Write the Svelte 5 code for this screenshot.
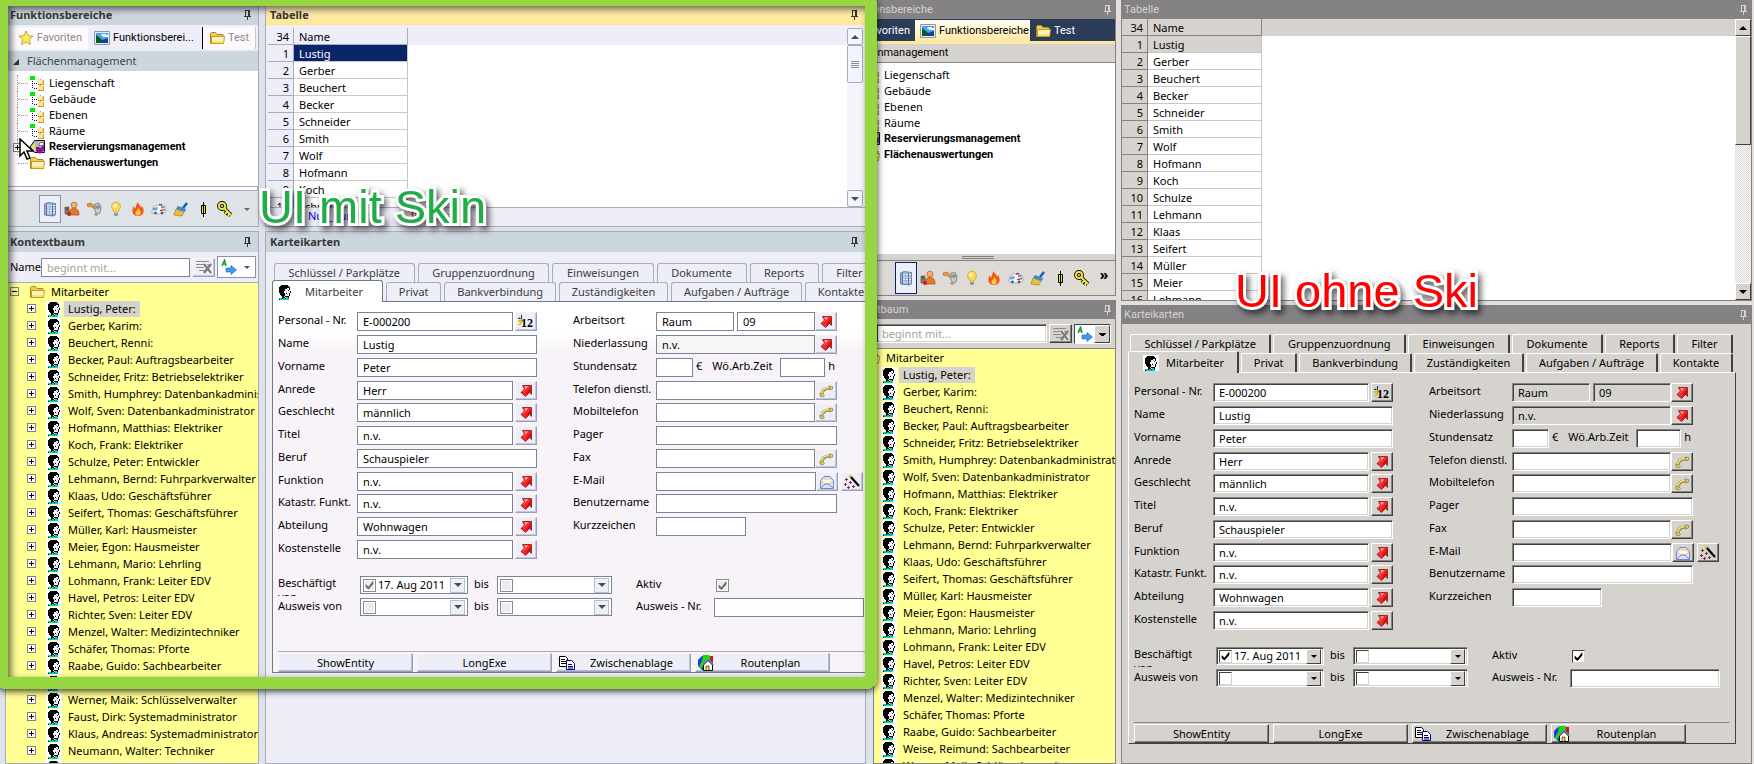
<script>
    const people = [
        "Lustig, Peter:",
        "Gerber, Karim:",
        "Beuchert, Renni:",
        "Becker, Paul: Auftragsbearbeiter",
        "Schneider, Fritz: Betriebselektriker",
        "Smith, Humphrey: Datenbankadministrator",
        "Wolf, Sven: Datenbankadministrator",
        "Hofmann, Matthias: Elektriker",
        "Koch, Frank: Elektriker",
        "Schulze, Peter: Entwickler",
        "Lehmann, Bernd: Fuhrparkverwalter",
        "Klaas, Udo: Geschäftsführer",
        "Seifert, Thomas: Geschäftsführer",
        "Müller, Karl: Hausmeister",
        "Meier, Egon: Hausmeister",
        "Lehmann, Mario: Lehrling",
        "Lohmann, Frank: Leiter EDV",
        "Havel, Petros: Leiter EDV",
        "Richter, Sven: Leiter EDV",
        "Menzel, Walter: Medizintechniker",
        "Schäfer, Thomas: Pforte",
        "Raabe, Guido: Sachbearbeiter",
        "Weise, Reimund: Sachbearbeiter",
        "Werner, Maik: Schlüsselverwalter",
        "Faust, Dirk: Systemadministrator",
        "Klaus, Andreas: Systemadministrator",
        "Neumann, Walter: Techniker",
        "Vogel, Jens: Techniker"
    ];

    const names = people.slice(0, 16).map((p) => p.split(",")[0]);

    const areas = [
        { label: "Liegenschaft", icon: "nodes" },
        { label: "Gebäude", icon: "nodes" },
        { label: "Ebenen", icon: "nodes" },
        { label: "Räume", icon: "nodes" },
        { label: "Reservierungsmanagement", icon: "reserve", bold: true, box: true },
        { label: "Flächenauswertungen", icon: "folder", bold: true }
    ];

    const tools = ["building", "person", "hammer", "bulb", "fire", "ambulance", "brush", "fuse", "key"];

    const tabRows = [
        ["Schlüssel / Parkplätze", "Gruppenzuordnung", "Einweisungen", "Dokumente", "Reports", "Filter"],
        ["Mitarbeiter", "Privat", "Bankverbindung", "Zuständigkeiten", "Aufgaben / Aufträge", "Kontakte"]
    ];

    const leftFields = [
        { label: "Personal - Nr.", value: "E-000200", icon: "number" },
        { label: "Name", value: "Lustig" },
        { label: "Vorname", value: "Peter" },
        { label: "Anrede", value: "Herr", icon: "arrow" },
        { label: "Geschlecht", value: "männlich", icon: "arrow" },
        { label: "Titel", value: "n.v.", icon: "arrow" },
        { label: "Beruf", value: "Schauspieler" },
        { label: "Funktion", value: "n.v.", icon: "arrow" },
        { label: "Katastr. Funkt.", value: "n.v.", icon: "arrow" },
        { label: "Abteilung", value: "Wohnwagen", icon: "arrow" },
        { label: "Kostenstelle", value: "n.v.", icon: "arrow" }
    ];

    const rightFields = [
        { label: "Telefon dienstl.", icon: "phone" },
        { label: "Mobiltelefon", icon: "phone" },
        { label: "Pager" },
        { label: "Fax", icon: "phone" },
        { label: "E-Mail", icon: "mail", extra: "wand" },
        { label: "Benutzername" },
        { label: "Kurzzeichen", short: true }
    ];

    const actions = [
        { label: "ShowEntity" },
        { label: "LongExe" },
        { label: "Zwischenablage", icon: "copy" },
        { label: "Routenplan", icon: "house" }
    ];

    const skins = [
        { id: "skin", area: "Funktionsberei..." },
        { id: "plain", area: "Funktionsbereiche" }
    ];
</script>

{#snippet icon(name)}
    <svg class="icon" viewBox="0 0 16 16" width="16" height="16" aria-hidden="true">
        {#if name === "head"}
            <g shape-rendering="crispEdges">
                <path fill="#fff" d="M0 0h16v16H0z" />
                <path fill="#000" d="M3 2h1V1h7v1h1v1h1v3h-1V4h-2v1H8v2H7v2h1v3h2v1H8v1H5v-2H4v-1H3V9H2V3h1z" />
                <path fill="#c8c8c8" d="M8 6h1v1H8zM10 5h1v1h-1zM9 8h1v1H9zM11 8h1v1h-1zM10 10h1v1h-1zM8 10h1v1H8zM7 12h1v1H7z" />
                <path fill="#2020d0" d="M11 6h1v1h-1z" />
                <path fill="#000" d="M12 5h1v1h-1zM13 7h1v2h-1zM12 9h1v2h-1zM10 12h2v1h-2zM12 11h1v1h-1zM9 9h1v1H9z" />
                <path fill="#0cc" d="M2 14h3v1H2zM6 14h2v1H6zM9 13h3v2H9zM3 15h9v1H3z" />
                <path fill="#000" d="M5 14h1v1H5zM8 14h1v1H8zM11 13h1v1h-1zM2 15h1v1H2z" />
            </g>
        {:else if name === "folder"}
            <path fill="#f0cc58" stroke="#b08818" d="M1.500 13.500v-10l1-1h4l1.500 2h6v9z" />
            <path fill="#fff6b8" stroke="#c89820" d="M2.500 13.500v-7h13l-1 7z" />
            <path fill="#f8e07c" d="M3 11h11.500l-.3 2H3z" />
        {:else if name === "nodes"}
            <g shape-rendering="crispEdges">
                <path fill="#0e0" d="M1 1h5v4H1z" />
                <path fill="#0000a0" d="M3 6h1v1H3zM3 8h1v1H3zM3 10h1v1H3zM3 12h1v1H3zM5 8h1v1H5zM7 8h1v1H7zM5 13h1v1H5zM7 13h1v1H7z" />
                <path fill="#b89c50" d="M9 4h3v1h3v5H9zM9 10h3v1h3v5H9z" />
                <path fill="#fce68c" d="M9 4h2v1h3v4H9zM9 10h2v1h3v4H9z" />
            </g>
        {:else if name === "reserve"}
            <path fill="#b8b8b8" stroke="#111" d="M5.500 1.500h10v12h-10L1 8z" />
            <path fill="#e8e060" d="M2 8l4-4v8z" />
            <path fill="#fff" stroke="#777" d="M9.500 6.500h5v-3h-3z" />
            <path fill="#90109a" d="M7 8h3l2 1 1-2h2v4l-4 4-4-3z" />
        {:else if name === "star"}
            <path fill="#ffe858" stroke="#b89028" stroke-width=".8" d="M8 1l2.100 4.600 5 .5-3.800 3.400 1.200 5L8 12l-4.500 2.500 1.200-5L1 6.100l5-.5z" />
        {:else if name === "picture"}
            <path fill="#e4ecf4" stroke="#8898b0" d="M.5 1.500h15v13H.5z" />
            <path fill="#48a0f0" d="M2 3h12v10H2z" />
            <path fill="#f8f8f8" d="M8 4h4v1h2v2H9V6H7z" />
            <path fill="#105820" d="M2 5l4 3 2 2 6 1v2H2z" />
            <path fill="#184090" d="M8 10l6-2v5H5z" />
        {:else if name === "building"}
            <path fill="#9db6d8" stroke="#49658c" stroke-width=".7" d="M2.500 3L6 1.500l7.500 1V14L11 15l-8.500-1z" />
            <path stroke="#eef4ff" stroke-width="1.200" d="M5 4.500h8M5 7h8M5 9.500h8M5 12h8" stroke-dasharray="2 1" />
            <path stroke="#344c74" d="M4.500 3v11.500M10.500 3v11.500" stroke-width=".6" />
        {:else if name === "person"}
            <circle cx="10" cy="4" r="3" fill="#f0b070" stroke="#b06020" stroke-width=".7" />
            <path fill="#e87820" stroke="#a84810" stroke-width=".7" d="M5 14c0-4 1-6.500 5-6.500s5 2.500 5 6.500z" />
            <path fill="#688" stroke="#444" stroke-width=".6" d="M1 6h4v7H1z" />
            <circle cx="3" cy="8" r="1.200" fill="#e02020" /><circle cx="5" cy="13" r="2" fill="#c82020" />
        {:else if name === "hammer"}
            <path fill="#e0a040" stroke="#a86c20" stroke-width=".7" d="M1 3l4-1 5 4-1 2-5-3-2 1z" />
            <path fill="#c8ccd0" stroke="#686c70" stroke-width=".7" d="M9 3l4-1 2 4-1 6-3 1-2-3z" />
            <circle cx="12" cy="6" r="2" fill="#8a9098" /><path fill="#d09030" d="M9 12l3 1-1 2-3-1z" />
        {:else if name === "bulb"}
            <path fill="#ffd850" stroke="#d8a020" stroke-width=".8" d="M8 1a4.500 4.500 0 0 1 3 7.800L10 11H6L5 8.800A4.500 4.500 0 0 1 8 1z" />
            <circle cx="7" cy="5" r="2" fill="#fff4c0" /><path fill="#90989c" d="M6 12h4v2l-1 1H7l-1-1z" />
        {:else if name === "fire"}
            <path fill="#f05818" d="M8 1c0 3 3 3 3 6l1-2c3 4 2 10-4 10S1 9 4 5c0 2 1 2 1 3 1-2 1-5 3-7z" />
            <path fill="#ffd040" d="M8 7c2 2 3 3 2.500 5.500C10 15 6 15 5.500 12.500 5 10 8 10 8 7z" />
        {:else if name === "ambulance"}
            <path fill="#f4f8fc" stroke="#8c9cac" stroke-width=".7" d="M1 10l1-4 4-2h6l3 3v4l-6 2-8-1z" />
            <path fill="#58a8e0" d="M2 7l5-1-1 3-4 .5zM10 5h3l1 2-4 .5z" /><path fill="#e02020" d="M8 3h3v1.500H8zM9 9l5-1v1.200l-5 1z" />
            <circle cx="4.500" cy="12" r="1.400" fill="#585c64" /><circle cx="11" cy="12" r="1.400" fill="#585c64" />
        {:else if name === "brush"}
            <path stroke="#1858b0" stroke-width="2.400" d="M10 7l4-5" /><path fill="#3888d8" d="M5 5l8 3-1 3-9-3z" />
            <path fill="#e8c040" stroke="#a08018" stroke-width=".7" d="M3 8l8 3-2 4-8-1z" />
        {:else if name === "fuse"}
            <path fill="#f0e020" stroke="#000" d="M6.500 4.500h4v8h-4z" /><path stroke="#000" d="M8.500 1v3M8.500 5v7M8.500 13v3" />
        {:else if name === "key"}
            <g fill="none" stroke="#000" stroke-width="3.800"><circle cx="5" cy="5" r="3" /><path d="M7 7l7 7M10 11l-2 2M12 13l-1 2" /></g>
            <g fill="none" stroke="#f4e840" stroke-width="2"><circle cx="5" cy="5" r="3" /><path d="M7 7l7 7M10 11l-2 2M12 13l-1 2" /></g>
        {:else if name === "arrow"}
            <path fill="#f22" stroke="#901010" stroke-width=".8" d="M4.500 2.500h9v9l-2-2L7.500 13.500 3 9.500l3.500-3.500z" />
            <path fill="#ff9c9c" d="M6 3.300h4.500L6 8.200l-1.500 1L7.500 6z" />
            <path fill="#801818" opacity=".6" d="M13 4v6l-1.500-1.300-3 3V10z" />
        {:else if name === "phone"}
            <path fill="none" stroke="#88783c" stroke-width="3" d="M3.500 12C4 7 7 4.500 13 5" />
            <path fill="none" stroke="#f0e07c" stroke-width="1.800" d="M3.500 11.500C4 7 7 4 13 4.500" />
            <path fill="#e0cc60" stroke="#88783c" stroke-width=".7" d="M2 10l3 1 1.500 1.500L5 14l-3-1zM11 3l3.500.5V6L12 7z" />
        {:else if name === "mail"}
            <path fill="#d8e0ff" stroke="#7c84c8" d="M1.500 14.500v-8L5 2.500h6l3.500 4v8z" />
            <path fill="#fff8d0" stroke="#c8b880" stroke-width=".6" d="M3 5h10v3l-3 2H6L3 8z" /><path fill="none" stroke="#7c84c8" d="M2 14l4-4h4l4 4" />
        {:else if name === "wand"}
            <path stroke="#000" stroke-width="2.200" d="M6 2l9 10" /><path stroke="#e8e020" stroke-width="2" d="M5 1l2 2" />
            <path fill="#803040" d="M2 4h1v3H2zM1 5h3v1H1zM1 9h1v3H1zM0 10h3v1H0zM6 7h1v3H6zM5 8h3v1H5zM4 12h1v3H4zM3 13h3v1H3zM9 11h1v3H9zM8 12h3v1H8z" />
        {:else if name === "number"}
            <path stroke="#c8b800" stroke-width="1.400" d="M0 7h5M1 3l3 3M1 11l3-3" /><path stroke="#0028b0" d="M3.500 1v4M0 4.500h2" />
            <text x="3" y="13" class="num-glyph">12</text>
        {:else if name === "copy"}
            <path fill="#fff" stroke="#000" d="M.5 1.500h6l2 2v8h-8z" /><path stroke="#000" d="M2 4.500h4M2 6.500h5M2 8.500h5" />
            <path fill="#fff" stroke="#000080" d="M7.500 5.500h5l3 3v6h-8z" /><path stroke="#000080" d="M9 9.500h4M9 11.500h5M9 13h5" />
        {:else if name === "house"}
            <path fill="#1040d8" d="M4 1h7l4 4v6l-4 4H4l-4-4V5z" /><path fill="#18d818" d="M5 0h6l3 3-6 4-5 7-2-3 3-5z" />
            <path fill="#d01818" d="M12 1h3v6l-3-2z" /><path fill="#fff" stroke="#000" d="M5.500 15.500V10L10 5.500l4.500 4.500v5.500z" />
            <path fill="#f0e020" stroke="#000" stroke-width=".6" d="M8 11h3v4.500H8z" /><path fill="none" stroke="#888" stroke-width="1.500" d="M4 10l6-6 5.500 6" />
        {:else if name === "clear"}
            <path stroke="#8c8c8c" d="M0 2.500h13M0 5.500h13M0 8.500h9M3 11.500h6" /><path stroke="#fff" stroke-width="4" d="M8 5l7 9" />
            <path stroke="#7c7c7c" stroke-width="2.400" d="M8 5l7 9M15 5l-7 9" />
        {:else if name === "sort"}
            <path fill="none" stroke="#18a038" stroke-width="1.500" d="M1 7l2.500-6L5 7M2 5h3" />
            <path fill="#3c9cf0" stroke="#1860b8" stroke-width=".6" d="M5 9h5V6.500l5.500 4.500-5.500 4.500V13H5z" />
        {/if}
    </svg>
{/snippet}

{#snippet title(text, highlight)}
    <header class="title" class:highlight>
        <h2>{text}</h2>
        <svg viewBox="0 0 9 10" width="9" height="10" aria-hidden="true">
            <path d="M2 0h5v6h1v1H5v3H4V7H1V6h1zM3 1v5h2V1z" fill="currentColor" fill-rule="evenodd" />
        </svg>
    </header>
{/snippet}

{#snippet date(id, label, value)}
    <span class="date">
        <input type="checkbox" checked={value !== ""} aria-label="{label} aktiv" />
        <input type="text" {id} {value} />
        <button type="button" class="drop" aria-label="{label} wählen"></button>
    </span>
{/snippet}

{#snippet app(skin)}
    <div class="app {skin.id}">
        <div class="side">
            <section class="panel upper">
                {@render title("Funktionsbereiche")}
                <nav class="areas">
                    <button type="button" class="fav">{@render icon("star")}Favoriten</button>
                    <button type="button" class="active">{@render icon("picture")}{skin.area}</button>
                    <button type="button">{@render icon("folder")}Test</button>
                </nav>
                <h3>Flächenmanagement</h3>
                <ul class="area-tree">
                    {#each areas as area}
                        <li class:bold={area.bold}>
                            {#if area.box}<b class="box"></b>{/if}
                            {@render icon(area.icon)}{area.label}
                        </li>
                    {/each}
                </ul>
                <div class="grip"></div>
                <div class="tools">
                    {#each tools as tool, i}
                        <button type="button" class:active={i === 0} aria-label={tool}>{@render icon(tool)}</button>
                    {/each}
                    <button type="button" class="more" aria-label="Mehr"></button>
                </div>
            </section>
            <section class="panel lower">
                {@render title("Kontextbaum")}
                <div class="search">
                    <label for="{skin.id}-search">Name</label>
                    <input type="text" id="{skin.id}-search" placeholder="beginnt mit..." />
                    <button type="button" class="key" aria-label="Leeren">{@render icon("clear")}</button>
                    <button type="button" class="sort" aria-label="Sortierung">{@render icon("sort")}<i></i></button>
                </div>
                <ul class="people">
                    <li class="root"><b class="box open"></b>{@render icon("folder")}<span>Mitarbeiter</span></li>
                    {#each people as person, i}
                        <li class:selected={i === 0}><b class="box"></b>{@render icon("head")}<span>{person}</span></li>
                    {/each}
                </ul>
            </section>
        </div>

        <div class="main">
            <section class="panel upper">
                {@render title("Tabelle", skin.id === "skin")}
                <div class="grid">
                    <div class="rows">
                        <table>
                            <thead><tr><th>34</th><th>Name</th></tr></thead>
                            <tbody>
                                {#each names as name, i}
                                    <tr class:selected={i === 0}><th>{i + 1}</th><td>{name}</td></tr>
                                {/each}
                            </tbody>
                        </table>
                    </div>
                    <div class="scroll">
                        <button type="button" class="up" aria-label="Nach oben"></button>
                        <div class="thumb"></div>
                        <button type="button" class="down" aria-label="Nach unten"></button>
                    </div>
                </div>
                {#if skin.id === "skin"}
                    <div class="sheets"><span>Nur_Kunden</span><span class="red">Personal</span></div>
                {/if}
            </section>

            <section class="panel lower">
                {@render title("Karteikarten")}
                <div class="cards">
                    {#each tabRows as row, r}
                        <div class="tabs" class:front={r === 1}>
                            {#each row as tab}
                                <button type="button" class:current={tab === "Mitarbeiter"}>
                                    {#if tab === "Mitarbeiter"}{@render icon("head")}{/if}{tab}
                                </button>
                            {/each}
                        </div>
                    {/each}
                    <form class="page">
                        <div class="columns">
                            <div class="fields">
                                {#each leftFields as field, i}
                                    <label for="{skin.id}-l{i}">{field.label}</label>
                                    <div class="field gap">
                                        <input type="text" id="{skin.id}-l{i}" value={field.value} />
                                        {#if field.icon}<button type="button" class="key" aria-label={field.label}>{@render icon(field.icon)}</button>{/if}
                                    </div>
                                {/each}
                            </div>
                            <div class="fields right">
                                <label for="{skin.id}-place">Arbeitsort</label>
                                <div class="field">
                                    <input type="text" class="room" id="{skin.id}-place" value="Raum" readonly />
                                    <input type="text" aria-label="Raumnummer" value="09" readonly />
                                    <button type="button" class="key" aria-label="Arbeitsort">{@render icon("arrow")}</button>
                                </div>
                                <label for="{skin.id}-branch">Niederlassung</label>
                                <div class="field">
                                    <input type="text" class="muted" id="{skin.id}-branch" value="n.v." readonly />
                                    <button type="button" class="key" aria-label="Niederlassung">{@render icon("arrow")}</button>
                                </div>
                                <label for="{skin.id}-rate">Stundensatz</label>
                                <div class="field rate">
                                    <input type="text" id="{skin.id}-rate" />
                                    <span>€</span>
                                    <label for="{skin.id}-hours">Wö.Arb.Zeit</label>
                                    <input type="text" class="hours" id="{skin.id}-hours" />
                                    <span>h</span>
                                </div>
                                {#each rightFields as field, i}
                                    <label for="{skin.id}-r{i}">{field.label}</label>
                                    <div class="field" class:short={field.short} class:wide={field.extra}>
                                        <input type="text" id="{skin.id}-r{i}" />
                                        {#if field.icon}<button type="button" class="key" aria-label={field.label}>{@render icon(field.icon)}</button>{/if}
                                        {#if field.extra}<button type="button" class="key extra" aria-label="Assistent">{@render icon(field.extra)}</button>{/if}
                                    </div>
                                {/each}
                            </div>
                        </div>
                        <div class="dates">
                            <label for="{skin.id}-from">Beschäftigt von</label>
                            {@render date(`${skin.id}-from`, "Beschäftigt von", "17. Aug 2011")}
                            <label for="{skin.id}-to">bis</label>
                            {@render date(`${skin.id}-to`, "Beschäftigt bis", "")}
                            <label for="{skin.id}-active">Aktiv</label>
                            <input type="checkbox" id="{skin.id}-active" checked />
                            <label for="{skin.id}-pass">Ausweis von</label>
                            {@render date(`${skin.id}-pass`, "Ausweis von", "")}
                            <label for="{skin.id}-passto">bis</label>
                            {@render date(`${skin.id}-passto`, "Ausweis bis", "")}
                            <label for="{skin.id}-passno">Ausweis - Nr.</label>
                            <input type="text" id="{skin.id}-passno" />
                        </div>
                        <div class="actions">
                            {#each actions as action}
                                <button type="button">
                                    {#if action.icon}{@render icon(action.icon)}{/if}
                                    <span>{action.label}</span>
                                </button>
                            {/each}
                        </div>
                    </form>
                </div>
            </section>
        </div>
    </div>
{/snippet}

<main>
    <div class="half front-half">
        {@render app(skins[0])}
        <div class="frame"></div>
        <svg class="cursor" viewBox="0 0 15 22" width="15" height="22" aria-hidden="true">
            <path fill="#fff" stroke="#000" stroke-width="1.500" d="M1 1v17l4-4 3 7 3-1-3-7h6z" />
        </svg>
        <p class="caption green">UI mit Skin</p>
    </div>
    <div class="half">
        {@render app(skins[1])}
        <p class="caption red">UI ohne Ski</p>
    </div>
</main>

<style>
    :global(body) {
        margin: 0;
        overflow: hidden;
    }

    main {
        display: grid;
        grid-template-columns: minmax(0, 874fr) minmax(0, 880fr);
        height: 100vh;
        overflow: hidden;
        font: 11px/16px "Noto Sans", "Open Sans", sans-serif;
        color: #000;
    }

    .half {
        position: relative;
        min-height: 0;
    }

    .front-half {
        z-index: 1;
    }

    h2, h3, p, ul {
        margin: 0;
        padding: 0;
        font-size: 11px;
        list-style: none;
    }

    button, input {
        box-sizing: border-box;
        margin: 0;
        font: inherit;
        color: inherit;
        border-radius: 0;
    }

    button {
        padding: 0;
        border: 0;
        background: none;
    }

    .icon {
        flex: none;
        display: block;
    }

    .num-glyph {
        font: bold 12px "Liberation Serif", serif;
    }

    /* Themes */
    .app {
        box-sizing: border-box;
        display: flex;
        height: 100%;
        overflow: hidden;
    }

    .skin {
        --line: #a8abbf;
        --face: #eeeef8;
        --bar: #cdd6dd;
        --key-light: #fdf3ee;
        --key-dark: #98a0bc;
        gap: 6px;
        padding: 4px 7px 0 5px;
        background: #dde3e8;
        border-right: 1px solid #7a8494;
    }

    .plain {
        --line: #848284;
        --face: #d6d3ce;
        --bar: #848284;
        --key-light: #fff;
        --key-dark: #424142;
        gap: 5px;
        padding: 0 2px;
        margin-left: -36px;
        background: #e4dfdc;
    }

    .side, .main {
        display: flex;
        flex-direction: column;
        gap: 4px;
    }

    .side {
        flex: none;
        width: 254px;
    }

    .plain .side {
        width: 276px;
    }

    .main {
        flex: 1;
        min-width: 0;
    }

    .panel {
        box-sizing: border-box;
        display: flex;
        flex-direction: column;
        border: 1px solid var(--line);
        background: var(--face);
        overflow: hidden;
    }

    .upper {
        flex: 0 0 223px;
    }

    .plain .side .upper {
        flex-basis: 296px;
    }

    .plain .main .upper {
        flex-basis: 301px;
    }

    .lower {
        flex: 1;
        min-height: 0;
    }

    .title {
        flex: none;
        display: flex;
        justify-content: space-between;
        align-items: center;
        height: 20px;
        padding: 0 6px 0 4px;
        background: var(--bar);
        color: #363636;
    }

    .title.highlight {
        background: linear-gradient(#ffefb8, #ffe794);
    }

    .plain .title {
        height: 18px;
        padding: 0 3px 0 2px;
        color: #d6d3ce;
    }

    .plain h2 {
        font: 11px/16px Roboto, sans-serif;
    }

    /* Function areas */
    .areas {
        flex: none;
        display: flex;
        box-sizing: border-box;
        height: 26px;
        padding: 2px 0;
        font-family: Roboto, sans-serif;
    }

    .areas button {
        display: flex;
        align-items: center;
        gap: 3px;
        padding: 0 6px;
        color: #8a8a8a;
        background: #fdf9fc;
        border-right: 1px solid #c8c8d0;
    }

    .areas .fav {
        box-sizing: border-box;
        width: 82px;
        justify-content: flex-end;
        border: 0;
    }

    .areas .active {
        box-sizing: border-box;
        width: 115px;
        color: #000;
        background: var(--face);
        border-right: 1px solid #000;
    }

    .plain .areas {
        height: 25px;
        padding: 1px 0 0;
        background: #2b3c59;
        border-bottom: 3px solid #ffe8a6;
    }

    .plain .areas button {
        padding: 0 5px;
        border: 0;
        background: none;
        color: #fff;
    }

    .plain .areas .fav {
        width: 74px;
    }

    .plain .areas .active {
        color: #000;
        background: linear-gradient(#fffdf4, #ffe8a6);
    }

    h3 {
        flex: none;
        padding: 2px 0 2px 21px;
        font-weight: normal;
        color: #3c4450;
        background: var(--bar);
        position: relative;
    }

    h3::before {
        content: "";
        position: absolute;
        left: 7px;
        top: 8px;
        border: 3px solid;
        border-color: transparent #333 #333 transparent;
    }

    .plain h3 {
        padding: 1px 0 1px 4px;
        font-family: Roboto, sans-serif;
        color: #000;
        background: var(--face);
        border-bottom: 1px solid #848284;
    }

    .area-tree {
        flex: 1;
        padding: 4px 0 0 11px;
        background: #fff;
    }

    .area-tree li {
        position: relative;
        display: flex;
        gap: 4px;
        height: 16px;
        padding-left: 11px;
        border-left: 1px dotted #999;
    }

    .area-tree li:last-child {
        border-left-color: transparent;
    }

    .area-tree li::before {
        content: "";
        position: absolute;
        left: 0;
        top: 8px;
        width: 10px;
        border-top: 1px dotted #999;
    }

    .area-tree .box {
        position: absolute;
        left: -5px;
        top: 4px;
    }

    .area-tree .bold {
        font: bold 11px/16px Roboto, sans-serif;
    }

    .grip {
        flex: none;
        height: 3px;
        border: 1px solid var(--line);
        border-left: 0;
        background: #fff;
    }

    .plain .grip {
        height: 6px;
        border-width: 0 0 1px;
        background: linear-gradient(#848284, #848284) center 2px / 32px 1px no-repeat, linear-gradient(#848284, #848284) center 4px / 32px 1px no-repeat, var(--face);
    }

    .tools {
        flex: none;
        display: flex;
        align-items: center;
        height: 35px;
        padding-left: 33px;
        background: #dee3e8;
    }

    .tools button {
        display: flex;
        justify-content: center;
        align-items: center;
        width: 22px;
        height: 28px;
    }

    .tools button.active {
        border: 1px solid #8d90ae;
        background: #eeeef8;
    }

    .more::before {
        content: "";
        border: 3px solid transparent;
        border-top-color: #666;
        margin-top: 4px;
    }

    .plain .tools {
        height: 34px;
        padding-left: 54px;
        background: #dedbd6;
    }

    .plain .tools button {
        height: 32px;
    }

    .plain .tools button.active {
        border-color: #0a246a;
    }

    .plain .more::before {
        content: "»";
        border: 0;
        margin-top: -6px;
        font-weight: bold;
        font-size: 14px;
    }

    /* Context tree */
    .search {
        flex: none;
        display: flex;
        align-items: center;
        gap: 2px;
        height: 30px;
        padding: 0 2px 0 4px;
        border-bottom: 1px solid var(--line);
    }

    .search label {
        flex: none;
        margin-right: -2px;
    }

    .search input {
        flex: 1;
        min-width: 0;
        height: 19px;
        padding: 0 5px;
        border: 1px solid #7a8494;
        background: #fff;
    }

    .search input::placeholder {
        color: #a5a59c;
    }

    .search .key {
        width: 23px;
    }

    .sort {
        display: flex;
        align-items: center;
        justify-content: space-between;
        width: 39px;
        height: 22px;
        padding: 0 5px 0 3px;
        border: 1px solid #8c94ac;
        background: #fff;
    }

    .sort i {
        border: 3px solid transparent;
        border-top-color: #555;
        margin-top: 3px;
    }

    .plain .search {
        height: 29px;
        padding-right: 4px;
    }

    .plain .sort {
        width: 37px;
        height: 20px;
        padding: 0 0 0 2px;
        border-color: #424142 #fff #fff #424142;
    }

    .plain .sort i {
        box-sizing: border-box;
        width: 16px;
        height: 18px;
        margin: 0;
        border: 1px solid;
        border-color: #fff #424142 #424142 #fff;
        background: linear-gradient(#000, #000) center 7px / 7px 1px no-repeat, linear-gradient(#000, #000) center 8px / 5px 1px no-repeat, linear-gradient(#000, #000) center 9px / 3px 1px no-repeat, #d6d3ce;
    }

    .people {
        flex: 1;
        min-height: 0;
        overflow: hidden;
        background: #ffff94;
        white-space: nowrap;
    }

    .people li {
        display: flex;
        align-items: center;
        height: 17px;
        padding-left: 21px;
    }

    .people .root {
        padding-left: 4px;
    }

    .people span {
        margin-left: 2px;
        padding: 0 4px;
        line-height: 16px;
    }

    .people .selected span {
        background: #d6d3ce;
    }

    .box {
        flex: none;
        box-sizing: border-box;
        width: 9px;
        height: 9px;
        border: 1px solid #848284;
        background: linear-gradient(#000, #000) center / 5px 1px no-repeat, linear-gradient(#000, #000) center / 1px 5px no-repeat, #fff;
    }

    .people .box {
        margin-right: 10px;
    }

    .box.open {
        background: linear-gradient(#000, #000) center / 5px 1px no-repeat, #ffff94;
    }

    /* Table */
    .grid {
        flex: 1;
        min-height: 0;
        display: flex;
        margin: 3px 2px 0;
    }

    .plain .grid {
        margin: 0;
    }

    .rows {
        flex: 1;
        overflow: hidden;
        background: linear-gradient(var(--face) 17px, #fff 0);
    }

    table {
        width: 140px;
        border-collapse: separate;
        border-spacing: 0;
        table-layout: fixed;
    }

    th, td {
        box-sizing: border-box;
        height: 17px;
        padding: 1px 5px 0;
        line-height: 15px;
        text-align: left;
        font-weight: normal;
        border-right: 1px solid #c8c8c4;
        border-bottom: 1px solid #c8c8c4;
    }

    th:first-child {
        width: 26px;
        padding: 1px 4px 0 0;
        text-align: right;
        background: var(--face);
        border-color: var(--line);
    }

    thead th {
        background: var(--face);
        border-color: var(--line);
    }

    .skin .selected td {
        color: #fff;
        background: #0a246a;
    }

    .plain .selected td {
        background: #d6d3ce;
    }

    .scroll {
        flex: none;
        display: flex;
        flex-direction: column;
        width: 16px;
        background: #f4f4fa;
    }

    .plain .scroll {
        background: repeating-conic-gradient(#fff 0 25%, #d6d3ce 0 50%) 0 0 / 2px 2px;
    }

    .scroll button, .thumb {
        box-sizing: border-box;
        border: 1px solid #a8abc0;
        border-radius: 2px;
        background: #f4f4fb;
    }

    .scroll button {
        display: grid;
        place-items: center;
        height: 17px;
    }

    .scroll button::before {
        content: "";
        border: 4px solid transparent;
    }

    .up::before {
        border-bottom-color: #3c4c74 !important;
        margin-top: -4px;
    }

    .down::before {
        border-top-color: #3c4c74 !important;
        margin-top: 4px;
    }

    .thumb {
        height: 38px;
        margin-bottom: auto;
        background: repeating-linear-gradient(#8c8ca0 0 1px, transparent 0 2px) center / 8px 7px no-repeat, #f4f4fb;
    }

    .plain .scroll button, .plain .thumb {
        border-color: #fff #424142 #424142 #fff;
        border-radius: 0;
        background: #d6d3ce;
    }

    .plain .thumb {
        height: 109px;
    }

    .plain .up::before {
        border-bottom-color: #000 !important;
    }

    .plain .down::before {
        border-top-color: #000 !important;
    }

    .sheets {
        flex: none;
        display: flex;
        gap: 38px;
        height: 18px;
        padding-left: 42px;
        border-top: 1px solid var(--line);
        color: #0000e0;
    }

    .sheets .red {
        color: #b00000;
    }

    /* Record cards */
    .cards {
        display: flex;
        flex-direction: column;
        min-width: 608px;
        padding: 11px 15px 0 6px;
    }

    .plain .cards {
        padding-top: 10px;
    }

    .tabs {
        box-sizing: border-box;
        display: flex;
        gap: 3px;
        width: 605px;
        height: 19px;
        padding-left: 2px;
    }

    .tabs.front {
        padding-left: 0;
    }

    .tabs button {
        flex: 1 1 auto;
        display: flex;
        justify-content: center;
        align-items: center;
        border: 1px solid #a8abb8;
        border-bottom: 0;
        border-radius: 3px 3px 0 0;
        color: #3c3c3c;
        white-space: nowrap;
    }

    .tabs .current {
        flex: 0 0 111px;
        justify-content: flex-start;
        gap: 12px;
        height: 22px;
        margin-top: -2px;
        padding-left: 4px;
        border-color: #6c7c88;
        background: #fff;
        position: relative;
    }

    .plain .tabs {
        gap: 2px;
    }

    .plain .tabs button {
        color: #000;
        border-color: #fff #424142 #fff #fff;
        border-right-width: 2px;
        border-radius: 2px 2px 0 0;
        background: #d6d3ce;
    }

    .plain .tabs .current {
        gap: 7px;
        padding-left: 14px;
    }

    .page {
        box-sizing: border-box;
        width: 608px;
        margin: 0;
        padding: 10px 6px 0 5px;
        border: 1px solid #6c7c88;
        background: linear-gradient(#fff 30px, #f8f3f8 50px);
    }

    .plain .page {
        border-color: #fff #424142 #424142 #fff;
        background: #d6d3ce;
    }

    .columns {
        display: flex;
        gap: 36px;
    }

    .fields {
        display: grid;
        grid-template-columns: 79px 180px;
        grid-template-rows: repeat(3, 23px) 22px repeat(3, 23px) 22px repeat(3, 23px);
    }

    .fields.right {
        grid-template-columns: 83px 181px;
    }

    .field {
        display: flex;
        align-items: flex-start;
    }

    .gap {
        gap: 2px;
    }

    .wide {
        width: 207px;
    }

    .extra {
        margin-left: 3px;
    }

    .short {
        width: 90px;
    }

    .page label {
        white-space: nowrap;
    }

    .page input[type="text"] {
        flex: 1;
        min-width: 0;
        width: 100%;
        height: 19px;
        padding: 0 5px;
        border: 1px solid #7a8494;
        background: #fff;
        outline: 0;
    }

    .page .room {
        flex: none;
        max-width: 81px;
        margin-right: 3px;
    }

    .skin .page input.muted {
        background: #f6f6f6;
    }

    .rate {
        gap: 3px;
    }

    .page .rate input[type="text"] {
        flex: none;
        width: 37px;
    }

    .page .rate .hours[type="text"] {
        width: 45px;
    }

    .rate label {
        padding-left: 7px;
        width: 65px;
    }

    .plain input[type="text"], .plain .date {
        border: 1px solid;
        border-color: #848284 #fff #fff #848284;
        box-shadow: inset 1px 1px #424142, inset -1px -1px #d6d3ce;
    }

    .plain .page input[type="text"] {
        border-color: #848284 #fff #fff #848284;
    }

    .plain .page input[readonly] {
        background: #d6d3ce;
    }

    .key {
        flex: none;
        display: grid;
        place-items: center;
        width: 22px;
        height: 19px;
        border: 1px solid;
        border-color: var(--key-light) var(--key-dark) var(--key-dark) var(--key-light);
        box-shadow: inset -1px -1px #c4c8dc;
        background: #eeeef8;
    }

    .plain .key {
        background: #d6d3ce;
        box-shadow: inset -1px -1px #848284;
    }

    .dates {
        display: grid;
        grid-template-columns: 82px 114px 23px 139px 78px 150px;
        grid-template-rows: 22px 22px;
        margin-top: 13px;
    }

    .dates > label:first-child {
        width: 60px;
        height: 20px;
        line-height: 14px;
        white-space: normal;
        overflow: hidden;
    }

    .date {
        box-sizing: border-box;
        display: flex;
        align-items: center;
        width: 108px;
        height: 18px;
        padding: 0 2px;
        border: 1px solid #7a8494;
        background: #fff;
    }

    .date:nth-child(6n + 4) {
        width: 115px;
    }

    .page .date input[type="text"] {
        height: 16px;
        padding: 0 0 0 2px;
        border: 0;
        background: none;
        box-shadow: none;
    }

    .drop {
        flex: none;
        display: grid;
        place-items: center;
        width: 15px;
        height: 15px;
        border: 1px solid #b8bccc;
        background: #eef0f6;
    }

    .drop::before {
        content: "";
        margin-top: 4px;
        border: 4px solid transparent;
        border-top-color: #3c4c74;
    }

    .plain .drop {
        border-color: #fff #424142 #424142 #fff;
        background: #d6d3ce;
    }

    .plain .drop::before {
        margin-top: 3px;
        border-width: 3px;
        border-top-color: #000;
    }

    input[type="checkbox"] {
        appearance: none;
        flex: none;
        width: 13px;
        height: 13px;
        border: 1px solid #8c8c8c;
        background: #ececec;
        box-shadow: inset 0 0 0 1px #fff;
    }

    .dates > input[type="checkbox"] {
        margin: 3px 2px;
    }

    input[type="checkbox"]:checked::before {
        content: "";
        display: block;
        height: 11px;
        background: #6a6a6a;
        clip-path: polygon(15% 40%, 40% 65%, 85% 10%, 85% 40%, 40% 92%, 15% 68%);
    }

    .plain input[type="checkbox"] {
        border-color: #424142 #d6d3ce #d6d3ce #424142;
        background: #fff;
    }

    .plain input[type="checkbox"]:checked::before {
        background: #000;
    }

    .actions {
        display: flex;
        gap: 4px;
        margin-top: 31px;
        padding-top: 1px;
        border-top: 1px solid var(--line);
    }

    .actions button {
        display: flex;
        align-items: center;
        width: 135px;
        height: 19px;
        padding: 0 2px;
        border: 1px solid;
        border-color: var(--key-light) var(--key-dark) var(--key-dark) var(--key-light);
        box-shadow: inset -1px -1px #b8bcd0;
        background: #eeeef8;
    }

    .plain .actions button {
        background: #d6d3ce;
        box-shadow: inset -1px -1px #848284;
    }

    .actions span {
        flex: 1;
    }

    /* Annotations on top of both windows */
    .frame {
        position: absolute;
        inset: -6px -3px auto -4px;
        height: 671px;
        border: 12px solid #96d641;
        border-radius: 10px;
        box-shadow: 0 2px 7px rgba(0, 0, 0, 0.8), inset 3px 3px 7px rgba(0, 0, 0, 0.6);
        pointer-events: none;
    }

    .cursor {
        position: absolute;
        left: 19px;
        top: 138px;
    }

    .caption {
        position: absolute;
        font: 47px/46px "Liberation Sans", Arial, sans-serif;
        white-space: nowrap;
        -webkit-text-stroke: 6px #fff;
        paint-order: stroke fill;
        filter: drop-shadow(3px 4px 3px rgba(0, 0, 0, 0.6));
    }

    .caption.green {
        left: 259px;
        top: 184px;
        color: #1fad45;
    }

    .caption.red {
        left: 361px;
        top: 268px;
        color: #f00;
    }
</style>
